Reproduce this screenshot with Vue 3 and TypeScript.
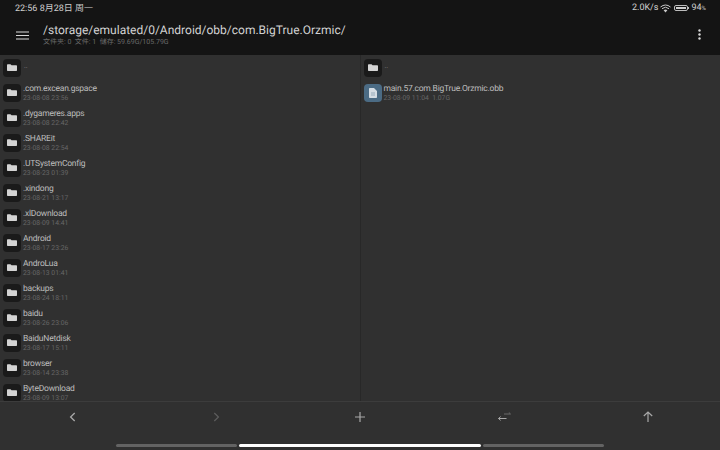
<script setup lang="ts">
interface Entry { name: string; meta: string }

const leftEntries: Entry[] = [
  { name: '.com.excean.gspace', meta: '23-08-08 23:56' },
  { name: '.dygameres.apps', meta: '23-08-08 22:42' },
  { name: '.SHAREit', meta: '23-08-08 22:54' },
  { name: '.UTSystemConfig', meta: '23-08-23 01:39' },
  { name: '.xindong', meta: '23-08-21 13:17' },
  { name: '.xlDownload', meta: '23-08-09 14:41' },
  { name: 'Android', meta: '23-08-17 23:26' },
  { name: 'AndroLua', meta: '23-08-13 01:41' },
  { name: 'backups', meta: '23-08-24 18:11' },
  { name: 'baidu', meta: '23-08-26 23:06' },
  { name: 'BaiduNetdisk', meta: '23-08-17 15:11' },
  { name: 'browser', meta: '23-08-14 23:38' },
  { name: 'ByteDownload', meta: '23-08-09 13:07' },
]
</script>

<template>
  <div class="screen">
    <header class="top">
      <div class="status">
        <span>22:56 8月28日 周一</span>
        <div class="status-right">
          <span>2.0K/s</span>
          <svg class="wifi" width="11" height="9" viewBox="0 0 11 9">
            <path d="M0.5 3 Q5.5 -1 10.5 3" fill="none" stroke="#c8c8c8" stroke-width="1" />
            <path d="M2 4.7 Q5.5 1.7 9 4.7" fill="none" stroke="#c8c8c8" stroke-width="1" />
            <path d="M3.6 6.3 Q5.5 4.9 7.4 6.3 L5.5 8.5 Z" fill="#c8c8c8" />
          </svg>
          <span class="battery"><span class="battery-fill"></span></span>
          <span class="nub"></span>
          <span class="pct">94<small>%</small></span>
        </div>
      </div>
      <div class="toolbar">
        <svg class="menu" width="13" height="9" viewBox="0 0 13 9">
          <path d="M0 1h13M0 4.5h13M0 8h13" stroke="#d8d8d8" stroke-width="1.2" />
        </svg>
        <div class="title-block">
          <div class="path">/storage/emulated/0/Android/obb/com.BigTrue.Orzmic/</div>
          <div class="summary">文件夹: 0&nbsp;&nbsp;文件: 1&nbsp;&nbsp;储存: 59.69G/105.79G</div>
        </div>
        <svg class="more" width="3" height="11" viewBox="0 0 3 11">
          <circle cx="1.5" cy="1.5" r="1.2" fill="#d8d8d8" />
          <circle cx="1.5" cy="5.5" r="1.2" fill="#d8d8d8" />
          <circle cx="1.5" cy="9.5" r="1.2" fill="#d8d8d8" />
        </svg>
      </div>
    </header>

    <main class="panes">
      <section class="pane left">
        <div class="row">
          <span class="tile"><svg class="folder" width="10" height="8" viewBox="0 0 10 8"><path d="M0 1a.7.7 0 0 1 .7-.7h2.8l1 1h4.8a.7.7 0 0 1 .7.7v4.3a.7.7 0 0 1-.7.7H.7a.7.7 0 0 1-.7-.7z" fill="#d4d4d4" /></svg></span>
          <div class="text"><div class="up">..</div></div>
        </div>
        <div v-for="e in leftEntries" :key="e.name" class="row">
          <span class="tile"><svg class="folder" width="10" height="8" viewBox="0 0 10 8"><path d="M0 1a.7.7 0 0 1 .7-.7h2.8l1 1h4.8a.7.7 0 0 1 .7.7v4.3a.7.7 0 0 1-.7.7H.7a.7.7 0 0 1-.7-.7z" fill="#d4d4d4" /></svg></span>
          <div class="text">
            <div class="name">{{ e.name }}</div>
            <div class="meta">{{ e.meta }}</div>
          </div>
        </div>
      </section>
      <section class="pane right">
        <div class="row">
          <span class="tile"><svg class="folder" width="10" height="8" viewBox="0 0 10 8"><path d="M0 1a.7.7 0 0 1 .7-.7h2.8l1 1h4.8a.7.7 0 0 1 .7.7v4.3a.7.7 0 0 1-.7.7H.7a.7.7 0 0 1-.7-.7z" fill="#d4d4d4" /></svg></span>
          <div class="text"><div class="up">..</div></div>
        </div>
        <div class="row">
          <span class="tile file"><svg width="8" height="10" viewBox="0 0 8 10"><path d="M.8 0H5l3 3v6.2a.8.8 0 0 1-.8.8H.8a.8.8 0 0 1-.8-.8V.8A.8.8 0 0 1 .8 0z" fill="#d5dde4" /><path d="M2 5h4M2 7h4" stroke="#7f97ab" stroke-width=".7" /></svg></span>
          <div class="text">
            <div class="name">main.57.com.BigTrue.Orzmic.obb</div>
            <div class="meta">23-08-09 11:04&nbsp;&nbsp;1.07G</div>
          </div>
        </div>
      </section>
    </main>

    <footer class="actions">
      <button class="action">
        <svg width="7" height="10" viewBox="0 0 7 10"><path d="M5.7 1 1.6 5l4.1 4" fill="none" stroke="#a8a8a8" stroke-width="1.3" /></svg>
      </button>
      <button class="action">
        <svg width="7" height="10" viewBox="0 0 7 10"><path d="M1.3 1l4.1 4-4.1 4" fill="none" stroke="#5c5c5c" stroke-width="1.3" /></svg>
      </button>
      <button class="action">
        <svg width="10" height="10" viewBox="0 0 10 10"><path d="M5 0v10M0 5h10" stroke="#a8a8a8" stroke-width="1.2" /></svg>
      </button>
      <button class="action">
        <svg width="13" height="9" viewBox="0 0 13 9">
          <path d="M6 2h6.5M10.8.4l1.7 1.6" fill="none" stroke="#686868" stroke-width="1" />
          <path d="M.5 6.5h8M2.6 4.6.5 6.5l2.1 1.9" fill="none" stroke="#a8a8a8" stroke-width="1" />
        </svg>
      </button>
      <button class="action">
        <svg width="10" height="11" viewBox="0 0 10 11"><path d="M5 11V1M.8 5 5 1l4.2 4" fill="none" stroke="#a8a8a8" stroke-width="1.2" /></svg>
      </button>
    </footer>

    <div class="gestures">
      <span class="pill dim"></span>
      <span class="pill bright"></span>
      <span class="pill dim"></span>
    </div>
  </div>
</template>

<style>
body { background: #303030; }
</style>

<style scoped>
.screen {
  width: 720px;
  height: 450px;
  display: flex;
  flex-direction: column;
  overflow: hidden;
  background: #303030;
  font-family: Roboto, "Noto Sans CJK SC", sans-serif;
  text-rendering: geometricPrecision;
}
.top {
  height: 55px;
  flex: none;
  background: #141414;
  display: flex;
  flex-direction: column;
}
.status {
  height: 15px;
  padding: 0 14px 0 15px;
  display: flex;
  justify-content: space-between;
  align-items: center;
  font-size: 9px;
  color: #cfcfcf;
}
.status-right {
  display: flex;
  align-items: center;
  gap: 2px;
  padding-top: 1px;
}
.battery {
  width: 14px;
  height: 6px;
  margin-left: 1px;
  border: 1px solid #bdbdbd;
  border-radius: 2px;
  padding: 1px;
  box-sizing: border-box;
  display: block;
}
.battery-fill {
  display: block;
  width: 94%;
  height: 100%;
  background: #cfcfcf;
}
.nub {
  width: 1px;
  height: 2px;
  margin-left: -2px;
  background: #bdbdbd;
}
.pct small { font-size: 6px; }
.toolbar {
  flex: 1;
  display: flex;
  align-items: flex-start;
  padding: 0 19px 0 16px;
}
.menu { margin-top: 16px; flex: none; }
.title-block { margin-left: 14px; flex: 1; }
.path {
  font-size: 12px;
  line-height: 16px;
  margin-top: 7px;
  color: #d2d2d2;
  white-space: nowrap;
}
.summary {
  font-size: 7px;
  line-height: 9px;
  color: #6a6a6a;
  white-space: nowrap;
}
.more { margin-top: 14px; flex: none; }
.panes {
  height: 346px;
  flex: none;
  display: flex;
  overflow: hidden;
}
.pane {
  flex: 1;
  min-width: 0;
  overflow: hidden;
}
.left { border-right: 1px solid #282828; }
.row {
  height: 25px;
  display: flex;
  align-items: center;
  padding-left: 3px;
}
.tile {
  width: 18px;
  height: 18px;
  flex: none;
  border-radius: 4px;
  background: #1a1a1a;
  display: flex;
  align-items: center;
  justify-content: center;
}
.tile.file { background: #4b6b84; }
.text {
  margin-left: 2px;
  min-width: 0;
}
.name {
  font-size: 8.5px;
  letter-spacing: -0.23px;
  line-height: 11px;
  margin-top: 1px;
  color: #bdbdbd;
  white-space: nowrap;
}
.meta {
  font-size: 6.8px;
  line-height: 9px;
  margin-top: -1px;
  color: #666;
  white-space: nowrap;
}
.up {
  font-size: 7px;
  line-height: 9px;
  color: #8f8f8f;
  margin-top: -2px;
  padding-left: 1px;
}
.actions {
  height: 29px;
  flex: none;
  border-top: 1px solid #3c3c3c;
  display: grid;
  grid-template-columns: repeat(5, 1fr);
}
.action {
  border: 0;
  padding: 0;
  background: none;
  display: flex;
  align-items: center;
  justify-content: center;
}
.gestures {
  flex: 1;
  display: flex;
  justify-content: center;
  gap: 2px;
  padding-top: 13px;
}
.pill {
  height: 3px;
  border-radius: 2px;
}
.dim { width: 121px; background: #636363; }
.bright { width: 242px; background: #fff; }
</style>
